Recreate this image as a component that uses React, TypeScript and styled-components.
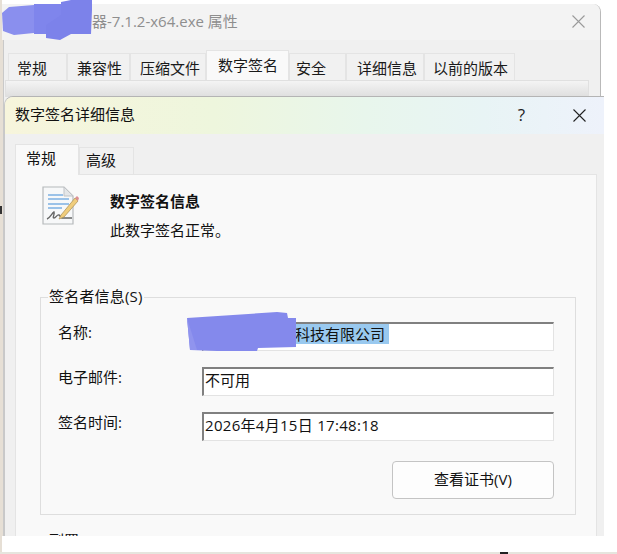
import React from 'react';
import styled, { createGlobalStyle } from 'styled-components';

const GlobalStyle = createGlobalStyle`
  html, body {
    margin: 0;
    padding: 0;
    background: #fff;
  }
  body {
    font-family: "Open Sans", "Noto Sans CJK SC", sans-serif;
    font-size: 15px;
    color: #111;
  }
`

const BACK_TABS = [
  { label: '常规', width: 59, left: 8 },
  { label: '兼容性', width: 63, left: 9 },
  { label: '压缩文件', width: 76, left: 9 },
  { label: '数字签名', width: 83, left: 11, active: true },
  { label: '安全', width: 57, left: 6 },
  { label: '详细信息', width: 78, left: 10 },
  { label: '以前的版本', width: 91, left: 8 },
];

const CloseIcon = ({ color }: { color: string }) => (
  <svg width="13" height="13" viewBox="0 0 13 13">
    <path d="M.5.5l12 12M12.5.5l-12 12" stroke={color} strokeWidth="1.1" fill="none" />
  </svg>
);

const SignatureIcon = () => (
  <svg width="38" height="40" viewBox="0 0 38 40">
    <path d="M1 1h21l9 9v28l-30 0z" fill="#f7f8f9" stroke="#b6b9bb" strokeWidth="1.2" />
    <path d="M22 1v9h9z" fill="#e4e6e8" stroke="#c0c3c6" />
    <path d="M6 9h15M6 13h21M6 18h21M6 22h14" stroke="#7db0e2" strokeWidth="1.3" />
    <path d="M5 33c3-1 5-6 7-7 1 2-2 6 0 6s3-4 5-3 1 3 3 3h10" stroke="#666" strokeWidth="1.4" fill="none" />
    <path d="M19 29l14-17 3 3-14 16-5 2z" fill="#f0cd7c" stroke="#a78c52" strokeWidth=".7" />
    <path d="M33 12l2-2 2 2-1 3z" fill="#dd8f92" />
  </svg>
);

export default function App() {
  const signerRows = [
    { label: '名称:', value: <Selected>科技有限公司</Selected> },
    { label: '电子邮件:', value: '不可用' },
    { label: '签名时间:', value: <Timestamp>2026年4月15日 17:48:18</Timestamp> },
  ];

  return (
    <Desktop>
      <GlobalStyle />
      <BackWindow>
        <BackTitleBar>
          <BackTitle>器-7.1.2-x64.exe 属性</BackTitle>
          <BackClose>
            <CloseIcon color="#9a9a9a" />
          </BackClose>
        </BackTitleBar>
        <BackTabs>
          {BACK_TABS.map((tab) => (
            <BackTab key={tab.label} $width={tab.width} $left={tab.left} $active={tab.active}>
              {tab.label}
            </BackTab>
          ))}
        </BackTabs>
        <BackPanel />
      </BackWindow>
      <EdgeStrip>
        <EdgeTick />
      </EdgeStrip>

      <Dialog>
        <DialogTitleBar>
          <DialogTitle>数字签名详细信息</DialogTitle>
          <HelpMark>?</HelpMark>
          <CloseIcon color="#222" />
        </DialogTitleBar>
        <DialogBody>
          <DialogTabs>
            <DialogTab $active $left={10}>常规</DialogTab>
            <DialogTab $left={6}>高级</DialogTab>
          </DialogTabs>
          <Panel>
            <InfoHeader>
              <IconSlot>
                <SignatureIcon />
              </IconSlot>
              <InfoText>
                <InfoTitle>数字签名信息</InfoTitle>
                <InfoStatus>此数字签名正常。</InfoStatus>
              </InfoText>
            </InfoHeader>
            <SignerGroup>
              <GroupLegend>签名者信息(S)</GroupLegend>
              {signerRows.map((row) => (
                <SignerRow key={row.label}>
                  <SignerLabel>{row.label}</SignerLabel>
                  <SignerValue>{row.value}</SignerValue>
                </SignerRow>
              ))}
              <ButtonRow>
                <CertButton>查看证书(V)</CertButton>
              </ButtonRow>
            </SignerGroup>
            <NextLegend>副署(G)</NextLegend>
          </Panel>
        </DialogBody>
      </Dialog>

      <TitleScribble viewBox="0 0 92 42">
        <path d="M1 13l7-6 25-2v28l-20 2-11-4z" fill="#8a8fee" />
        <path d="M33 4h28v30h-28z" fill="#7f85ec" />
        <path d="M60 2l10-2 21 0 0 10-1 24-20 0-11 6-14-2 0-13 15-10z" fill="#7c82ea" />
      </TitleScribble>
      <NameScribble viewBox="0 0 110 40">
        <path d="M0 7l90-6 10 1 1 5 8 0 0 29-38 1-1 3-40 0-27-1z" fill="#8489ec" />
        <path d="M0 7l10 32-7 0z" fill="#9094ee" />
      </NameScribble>

      <TaskbarEdge>
        <TaskbarTick />
      </TaskbarEdge>
    </Desktop>
  );
}

const Selected = styled.span`
  display: inline-block;
  padding: 0 4px 0 90px;
  line-height: 20px;
  background: #99c9ef;
`

const Timestamp = styled.span`
  letter-spacing: .3px;
`

const Desktop = styled.div`
  position: relative;
  width: 617px;
  height: 554px;
  overflow: hidden;
  background: #fff;
`

const EdgeStrip = styled.div`
  position: absolute;
  left: 0;
  top: 0;
  bottom: 0;
  width: 2px;
  background: #e6dfd5;
`

const EdgeTick = styled.div`
  position: absolute;
  left: 0;
  top: 206px;
  width: 2px;
  height: 8px;
  background: #333;
`

const BackWindow = styled.div`
  position: absolute;
  left: 0;
  top: 4px;
  width: 601px;
  height: 532px;
  box-sizing: border-box;
  background: linear-gradient(90deg, #e6dfd5 3px, #c9c9c9 3px, #c9c9c9 4px, #f0f0f0 4px);
  border-right: 1px solid #b9b9b9;
  border-top-right-radius: 8px;
  display: flex;
  flex-direction: column;
`

const BackTitleBar = styled.div`
  height: 36px;
  flex: none;
  display: flex;
  align-items: center;
  justify-content: space-between;
  padding: 0 15px 0 92px;
  background: #f3f3f3;
  border-top-right-radius: 8px;
`

const BackTitle = styled.div`
  margin-top: -4px;
  color: #8e8e8e;
  font-size: 15px;
  white-space: nowrap;
`

const BackClose = styled.div`
  display: flex;
  margin-top: -2px;
`

const BackTabs = styled.div`
  display: flex;
  align-items: flex-end;
  height: 40px;
  flex: none;
  padding-left: 8px;
`

const BackTab = styled.div<{ $width: number; $left: number; $active?: boolean }>`
  width: ${(p) => p.$width}px;
  height: ${(p) => (p.$active ? 30 : 27)}px;
  box-sizing: border-box;
  display: flex;
  align-items: center;
  padding-left: ${(p) => p.$left}px;
  padding-bottom: ${(p) => (p.$active ? 3 : 0)}px;
  background: ${(p) => (p.$active ? '#f9f9f9' : '#f1f1f1')};
  border: 1px solid #e4e4e4;
  border-bottom: 0;
  color: #1a1a1a;
  white-space: nowrap;
`

const BackPanel = styled.div`
  margin-left: 5px;
  width: 584px;
  height: 17px;
  box-sizing: border-box;
  background: linear-gradient(#f4f4f4, #dedede);
  border: 1px solid #e0e0e0;
  border-bottom: 0;
`

const Dialog = styled.div`
  position: absolute;
  left: 5px;
  top: 97px;
  width: 599px;
  height: 439px;
  display: flex;
  flex-direction: column;
  overflow: hidden;
  background: #f0f0f0;
  border-top-left-radius: 8px;
  box-shadow: 0 -1px 0 #b4b4b4, -1px 0 0 #c8c8c8;
`

const DialogTitleBar = styled.div`
  height: 37px;
  flex: none;
  display: flex;
  align-items: center;
  padding: 0 18px 0 10px;
  background: linear-gradient(90deg, #f7f5dc 0%, #eef6dd 35%, #e8f6ec 60%, #e8f4f5 80%, #eef2fb 100%);
`

const DialogTitle = styled.div`
  flex: 1;
  margin-top: -4px;
  color: #111;
`

const HelpMark = styled.div`
  margin-right: 48px;
  margin-top: -3px;
  color: #222;
  font-size: 17px;
`

const DialogBody = styled.div`
  flex: 1;
  min-height: 0;
  display: flex;
  flex-direction: column;
  padding: 10px 7px 0 10px;
`

const DialogTabs = styled.div`
  display: flex;
  align-items: flex-end;
  height: 30px;
  flex: none;
`

const DialogTab = styled.div<{ $active?: boolean; $left: number }>`
  position: relative;
  top: ${(p) => (p.$active ? 1 : 0)}px;
  width: ${(p) => (p.$active ? 64 : 55)}px;
  height: ${(p) => (p.$active ? 31 : 27)}px;
  box-sizing: border-box;
  display: flex;
  align-items: center;
  padding-left: ${(p) => p.$left}px;
  padding-bottom: ${(p) => (p.$active ? 5 : 3)}px;
  background: ${(p) => (p.$active ? '#f9f9f9' : '#f1f1f1')};
  border: 1px solid #e4e4e4;
  border-bottom: 0;
  z-index: ${(p) => (p.$active ? 1 : 0)};
`

const Panel = styled.div`
  flex: 1;
  min-height: 0;
  background: #f9f9f9;
  border: 1px solid #e4e4e4;
  border-bottom: 0;
  padding: 11px 20px 0 24px;
`

const InfoHeader = styled.div`
  display: flex;
  height: 111px;
`

const IconSlot = styled.div`
  width: 68px;
  flex: none;
  padding-left: 2px;
`

const InfoText = styled.div`
  display: flex;
  flex-direction: column;
  padding-top: 4px;
  gap: 7px;
`

const InfoTitle = styled.div`
  font-weight: 700;
  line-height: 22px;
`

const InfoStatus = styled.div`
  line-height: 22px;
`

const SignerGroup = styled.div`
  position: relative;
  height: 218px;
  box-sizing: border-box;
  border: 1px solid #dedede;
  padding: 24px 21px 0 17px;
`

const GroupLegend = styled.div`
  position: absolute;
  left: 7px;
  top: -12px;
  line-height: 20px;
  padding: 0 1px;
  letter-spacing: .2px;
  background: #f9f9f9;
`

const SignerRow = styled.div`
  display: flex;
  margin-bottom: 16px;
`

const SignerLabel = styled.div`
  width: 144px;
  flex: none;
  line-height: 20px;
`

const SignerValue = styled.div`
  flex: 1;
  height: 29px;
  box-sizing: border-box;
  display: flex;
  align-items: center;
  padding: 0 0 6px 1px;
  background: #fff;
  border-style: solid;
  border-width: 2px 1px 1px 2px;
  border-color: #808080 #e3e3e3 #e3e3e3 #808080;
  white-space: nowrap;
`

const ButtonRow = styled.div`
  display: flex;
  justify-content: flex-end;
  padding-top: 4px;
`

const CertButton = styled.div`
  width: 162px;
  height: 38px;
  box-sizing: border-box;
  display: flex;
  align-items: center;
  justify-content: center;
  padding-bottom: 4px;
  background: #fdfdfd;
  border: 1px solid #c4c4c4;
  border-radius: 4px;
`

const NextLegend = styled.div`
  margin: 15px 0 0 9px;
  line-height: 20px;
`

const TitleScribble = styled.svg`
  position: absolute;
  left: 1px;
  top: 0;
  width: 92px;
  height: 42px;
`

const NameScribble = styled.svg`
  position: absolute;
  left: 187px;
  top: 311px;
  width: 110px;
  height: 40px;
`

const TaskbarEdge = styled.div`
  position: absolute;
  left: 0;
  right: 0;
  bottom: 0;
  height: 2px;
  background: #e6e5de;
`

const TaskbarTick = styled.div`
  position: absolute;
  left: 500px;
  top: 0;
  width: 8px;
  height: 2px;
  background: #222;
`
